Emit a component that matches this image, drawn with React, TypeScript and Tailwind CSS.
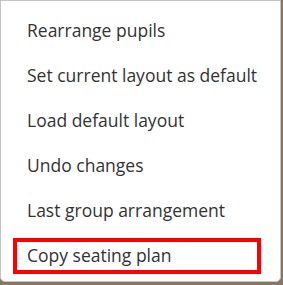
const items = [
  "Rearrange pupils",
  "Set current layout as default",
  "Load default layout",
  "Undo changes",
  "Last group arrangement",
];

export default function App() {
  return (
    <div className="w-[283px] h-[285px] bg-[#8a7560] overflow-hidden">
      <div
        className="w-[281px] h-[282px] bg-white border border-[#c4c4c4] rounded-b-[5px] flex flex-col pt-[7px] text-[17.5px] text-[#333]"
        style={{ fontFamily: '"Open Sans", sans-serif' }}
      >
        {items.map((label) => (
          <div key={label} className="h-[45px] flex items-center pl-[26px]">
            {label}
          </div>
        ))}
        <div className="h-[45px] flex items-center pl-[12px]">
          <div className="w-[248px] h-[36px] border-4 border-[#ff0000] flex items-center pl-[10px]">
            Copy seating plan
          </div>
        </div>
      </div>
    </div>
  );
}
